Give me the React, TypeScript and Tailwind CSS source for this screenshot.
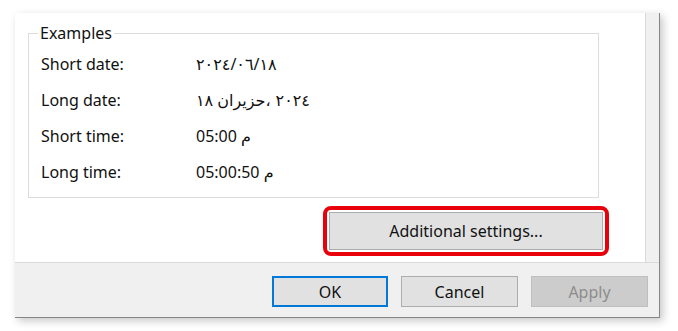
import React from "react";

const font = { fontFamily: '"Noto Sans", "DejaVu Sans", sans-serif' };

const rows: { label: string; value: React.ReactNode }[] = [
  { label: "Short date:", value: "٢٠٢٤/٠٦/١٨" },
  {
    label: "Long date:",
    value: (
      <span className="flex">
        <span>١٨</span>
        <span className="ml-[4px]">حزيران</span>
        <span>،</span>
        <span className="ml-[5px]">٢٠٢٤</span>
      </span>
    ),
  },
  { label: "Short time:", value: "05:00 م" },
  { label: "Long time:", value: "05:00:50 م" },
];

const App = () => {
  return (
    <div className="w-[678px] h-[331px] bg-white overflow-hidden pl-[15px] pt-[13px] text-[16px] text-[#111]" style={font}>
      {/* ---------------- WINDOW ---------------- */}
      <div className="flex flex-col w-[645px] h-[305px] bg-[#f0f0f0] border-r border-b border-[#858585] shadow-[3px_3px_8px_rgba(0,0,0,0.22)]">
        <div className="flex h-[249px]">
          {/* tab page */}
          <div className="w-[631px] bg-white border-r border-[#d9d9d9] pl-[13px] pt-[9px]">
            <fieldset className="w-[571px] border border-[#dcdcdc] pl-[12px] pt-[2px] pb-[7px]">
              <legend className="-ml-[3px] px-[2px] leading-[22px]">Examples</legend>
              {rows.map((r) => (
                <div key={r.label} className="flex items-center h-[36px]">
                  <span className="w-[155px]">{r.label}</span>
                  <span dir="ltr">{r.value}</span>
                </div>
              ))}
            </fieldset>
            <div className="flex justify-end w-[581px] mt-[8px]">
              <div className="rounded-[8px] border-[4px] border-[#e8000b] p-[2px]">
                <button className="w-[274px] h-[38px] bg-[#e1e1e1] border border-[#adadad] text-[16px]">
                  Additional settings...
                </button>
              </div>
            </div>
          </div>
          <div className="flex-1" />
        </div>

        {/* ---------------- FOOTER BUTTONS ---------------- */}
        <div className="flex-1 border-t border-[#dadada] flex justify-end items-start gap-[13px] pt-[13px] pr-[11px]">
          <button className="w-[116px] h-[31px] bg-[#e1e1e1] border-2 border-[#0078d7]">OK</button>
          <button className="w-[117px] h-[31px] bg-[#e1e1e1] border border-[#adadad]">Cancel</button>
          <button className="w-[117px] h-[31px] bg-[#cccccc] border border-[#bfbfbf] text-[#8c8c8c]">Apply</button>
        </div>
      </div>
    </div>
  );
};

export default App;
